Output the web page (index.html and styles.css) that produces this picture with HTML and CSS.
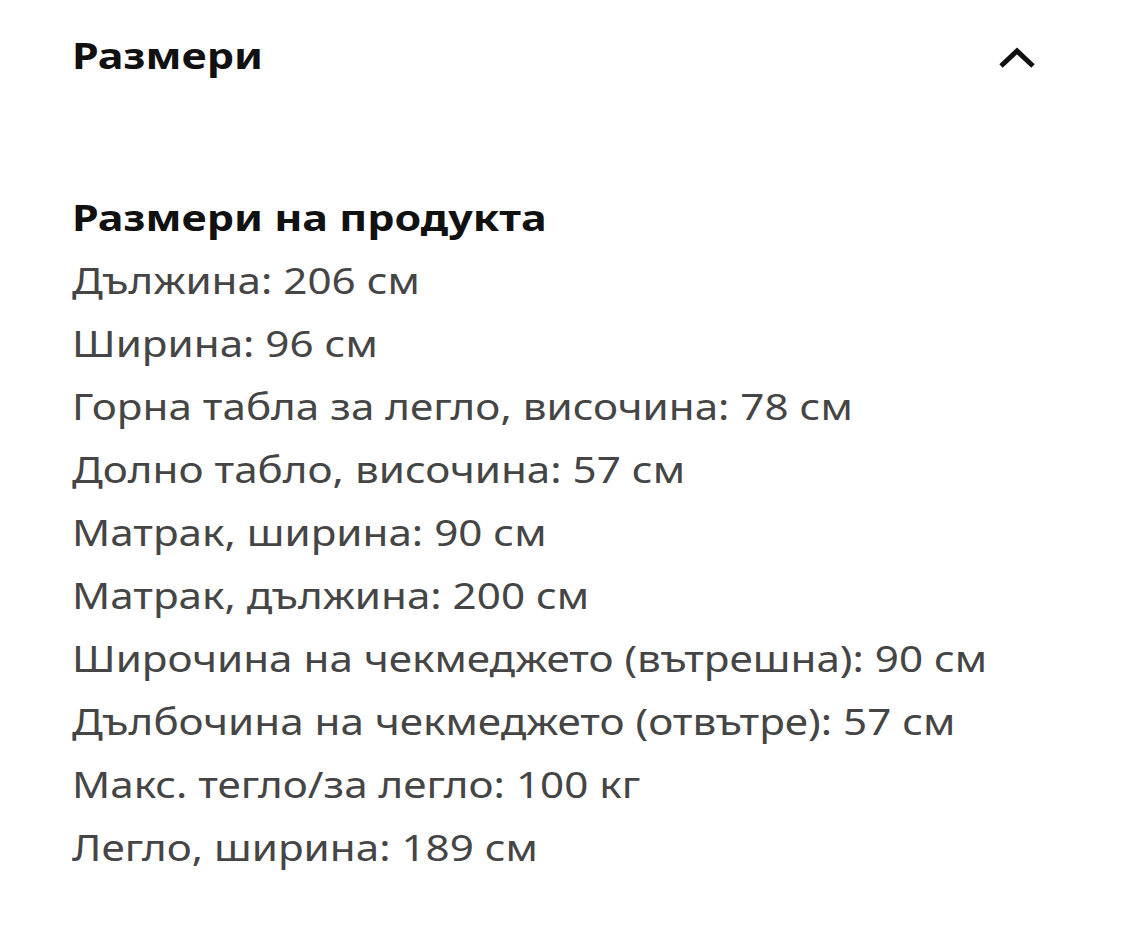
FILE: index.html
```html
<!DOCTYPE html>
<html lang="bg">
<head>
<meta charset="utf-8">
<link rel="stylesheet" href="styles.css">
</head>
<body>
<section class="panel">
  <header class="panel-head">
    <h2 class="panel-title">Размери</h2>
    <svg class="chevron" width="40" height="24" viewBox="0 0 40 24" aria-hidden="true">
      <path d="M4 21 L20 6 L36 21" fill="none" stroke="#111" stroke-width="5"/>
    </svg>
  </header>
  <div class="panel-body">
    <h3 class="sub-title">Размери на продукта</h3>
    <ul class="dims">
      <li>Дължина: 206 см</li>
      <li>Ширина: 96 см</li>
      <li>Горна табла за легло, височина: 78 см</li>
      <li>Долно табло, височина: 57 см</li>
      <li>Матрак, ширина: 90 см</li>
      <li>Матрак, дължина: 200 см</li>
      <li>Широчина на чекмеджето (вътрешна): 90 см</li>
      <li>Дълбочина на чекмеджето (отвътре): 57 см</li>
      <li>Макс. тегло/за легло: 100 кг</li>
      <li>Легло, ширина: 189 см</li>
    </ul>
  </div>
</section>
</body>
</html>
```
FILE: styles.css
```css
html, body {
  margin: 0;
  padding: 0;
  background: #fff;
}
body {
  font-family: "Noto Sans", "Open Sans", sans-serif;
  color: #454545;
}
.panel {
  padding: 24px 88px 0 72px;
}
.panel-head {
  display: flex;
  justify-content: space-between;
  align-items: center;
  height: 63px;
}
.panel-title {
  margin: 0;
  font-size: 36px;
  font-weight: 700;
  color: #111;
  line-height: 63px;
  transform: scaleX(1.195);
  transform-origin: left center;
}
.chevron {
  display: block;
  margin-top: 2px;
}
.panel-body {
  padding-top: 99px;
}
.sub-title {
  margin: 0;
  width: fit-content;
  font-size: 36px;
  font-weight: 700;
  color: #111;
  line-height: 63px;
  transform: scaleX(1.195);
  transform-origin: left center;
}
.dims {
  list-style: none;
  margin: 0;
  padding: 0;
  width: fit-content;
  font-size: 36px;
  line-height: 63px;
  transform: scaleX(1.172);
  transform-origin: left top;
}
```
